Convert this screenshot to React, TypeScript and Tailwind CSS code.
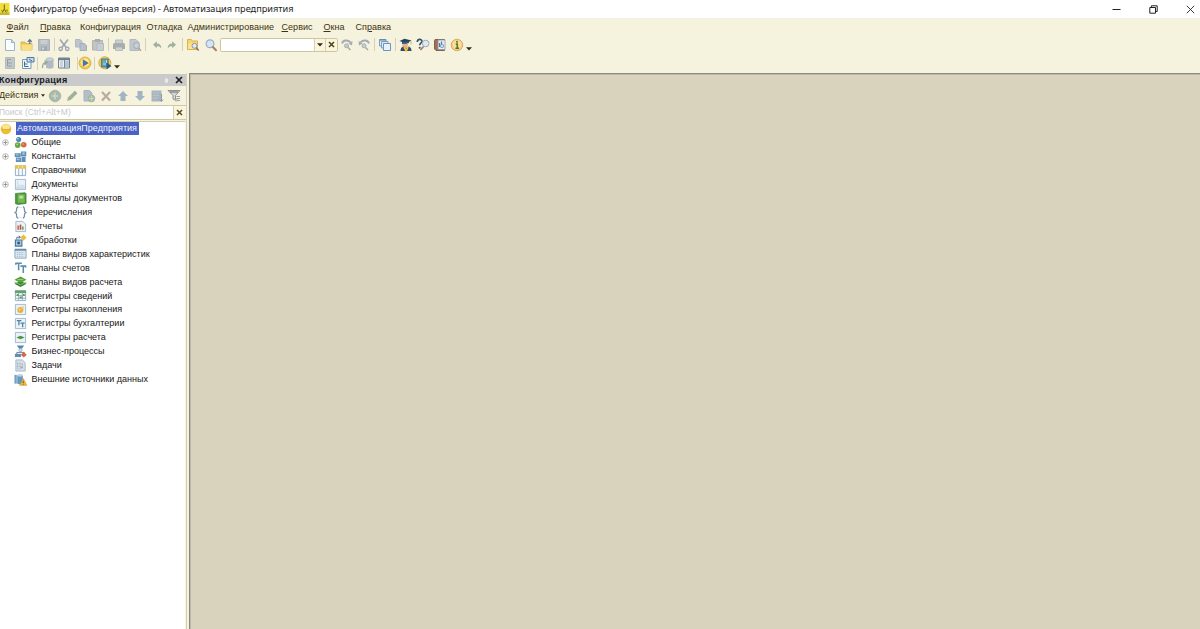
import type { ReactNode } from "react";

type IconProps = { children: ReactNode; className?: string };

function Icon({ children, className = "" }: IconProps) {
  return (
    <svg viewBox="0 0 14 14" width="14" height="14" fill="none" className={`shrink-0 ${className}`}>
      {children}
    </svg>
  );
}

function Divider({ className = "" }: { className?: string }) {
  return <div className={`h-[13px] w-px shrink-0 bg-[#d5d0b9] ${className}`} />;
}

function DropArrow({ className = "" }: { className?: string }) {
  return (
    <svg viewBox="0 0 6 4" width="6" height="4" className={`shrink-0 ${className}`}>
      <path d="M0 .3h6L3 3.6z" fill="#3b2a08" />
    </svg>
  );
}

function TitleBar() {
  return (
    <header className="flex h-[18px] items-center bg-white">
      <svg viewBox="0 0 10 12" width="10" height="12" className="shrink-0">
        <rect width="9.5" height="12" rx="1" fill="#f3dc35" />
        <path d="M0 9.5h9.5V12H0z" fill="#c9b82c" />
        <path d="M4.300 1.500v4.500M1.500 7l1 1.500M7 6.500v2M2.500 9.500 4.300 6l2 3.500" stroke="#6b6520" strokeWidth="1" fill="none" />
      </svg>
      <h1 className="ml-[3.5px] whitespace-nowrap font-['Noto_Sans',sans-serif] text-[9.2px] leading-[18px] text-[#1d1d1d]">
        Конфигуратор (учебная версия) - Автоматизация предприятия
      </h1>
      <div className="ml-auto flex items-center pr-[5px] text-[#222]">
        <svg viewBox="0 0 9 9" width="9" height="9" className="mr-[28px]">
          <path d="M.5 4.5h8" stroke="currentColor" />
        </svg>
        <svg viewBox="0 0 9 9" width="9" height="9" className="mr-[28px]" fill="none">
          <path d="M.8 2.5h5.7v5.7H.8zM2.4 2.3V.8h5.8v5.7H6.7" stroke="currentColor" />
        </svg>
        <svg viewBox="0 0 9 9" width="9" height="9">
          <path d="m.8.8 7.4 7.4M8.2.8.8 8.2" stroke="currentColor" strokeWidth=".9" />
        </svg>
      </div>
    </header>
  );
}

const menu = [
  { before: "", key: "Ф", after: "айл", width: "w-[33.5px]" },
  { before: "", key: "П", after: "равка", width: "w-[40px]" },
  { before: "Конфигурация", key: "", after: "", width: "w-[66.5px]" },
  { before: "Отладка", key: "", after: "", width: "w-[41px]" },
  { before: "Администрирование", key: "", after: "", width: "w-[94px]" },
  { before: "", key: "С", after: "ервис", width: "w-[42px]" },
  { before: "", key: "О", after: "кна", width: "w-[32px]" },
  { before: "Сп", key: "р", after: "авка", width: "w-[40px]" },
];

function MenuBar() {
  return (
    <nav className="flex h-[18px] items-center pl-[6.5px] text-[9px] tracking-[0.05px] text-[#40330f]">
      {menu.map((m) => (
        <span key={m.before + m.key + m.after} className={`shrink-0 whitespace-nowrap ${m.width}`}>
          {m.before}
          {m.key && <span className="underline decoration-[0.7px] underline-offset-1">{m.key}</span>}
          {m.after}
        </span>
      ))}
    </nav>
  );
}

function MainToolbar() {
  return (
    <div className="flex h-[17px] items-center pl-[3px]">
      <Icon>
        <path d="M2.5 1.5h6l3 3v8h-9z" fill="#fbfdff" stroke="#9bb4cb" />
        <path d="M8.5 1.5v3h3" fill="#c3dbef" stroke="#87a5c1" strokeWidth=".8" />
      </Icon>
      <Icon className="ml-[3px]">
        <path d="M1 4h4l1 1.500h6V12H1z" fill="#eec653" stroke="#d3a743" strokeWidth=".7" />
        <path d="M1.500 6.500h10.300V12H1.500z" fill="#f8df82" />
        <path d="M9.800 6V2M7.800 3.800l2-2.200 2 2.200" stroke="#53788c" strokeWidth="1.200" />
      </Icon>
      <Icon className="ml-[3px]">
        <path d="M1.500 1.500h11v11h-11z" fill="#b5bdc2" stroke="#aab2b8" />
        <path d="M3.500 2h7v4h-7z" fill="#c9cfd1" />
        <path d="M4 8.500h6v4H4z" fill="#9fa9b1" />
        <path d="M5 9.500h2v2H5z" fill="#d4d8d8" />
      </Icon>
      <Divider className="ml-[2.500px]" />
      <Icon className="ml-[2.500px]">
        <path d="m3 1.500 6.200 8M11 1.500l-6.200 8" stroke="#98a3ae" strokeWidth="1.500" />
        <circle cx="3.700" cy="10.800" r="1.700" stroke="#99a6b7" strokeWidth="1.300" />
        <circle cx="10.300" cy="10.800" r="1.700" stroke="#99a6b7" strokeWidth="1.300" />
      </Icon>
      <Icon className="ml-[3px]">
        <path d="M1.500 1.500h4.500l2 2v5.500H1.500z" fill="#bcc5cd" stroke="#aeb8c2" />
        <path d="M6 5.500h4.500l2 2v5H6z" fill="#b7c0ca" stroke="#a3aebb" />
      </Icon>
      <Icon className="ml-[3px]">
        <path d="M1.500 2.500h10v9.500h-10z" fill="#c2c5c2" stroke="#b0b3b2" />
        <path d="M4 1h5v3H4z" fill="#a5acb1" />
        <path d="M6 5.500h6.500v7H6z" fill="#c7ced3" stroke="#b0bac2" />
      </Icon>
      <Divider className="ml-[2.500px]" />
      <Icon className="ml-[3.500px]">
        <path d="M3.500 2h7v4h-7z" fill="#cbcfd0" stroke="#b4babd" />
        <path d="M2.500 5h9q1.500 0 1.500 2v4H1V7q0-2 1.500-2z" fill="#a8adb0" />
        <path d="M3.500 9h7v3.500h-7z" fill="#ced1d0" stroke="#9fa4a6" strokeWidth=".6" />
      </Icon>
      <Icon className="ml-[2px]">
        <path d="M2 1.500h6l3 3v8H2z" fill="#c1c8cd" stroke="#b1b9bf" />
        <circle cx="8.500" cy="7.500" r="3" fill="#c9d0d4" stroke="#9da8b1" />
        <path d="m10.500 10 2.500 2.800" stroke="#b29f99" strokeWidth="1.500" />
      </Icon>
      <Divider className="ml-[2.500px]" />
      <Icon className="ml-[4px]">
        <path d="M3 6.800 6.800 3.300V5.500c3 0 4.500 1.700 4.500 5-1-1.700-2.300-2.300-4.500-2.300v2z" fill="#9eb09e" />
      </Icon>
      <Icon className="ml-[1px]">
        <path d="M11 6.800 7.200 3.300V5.500c-3 0-4.500 1.700-4.500 5 1-1.700 2.300-2.300 4.500-2.300v2z" fill="#9eb09e" />
      </Icon>
      <Divider className="ml-[3.500px]" />
      <Icon className="ml-[3px]">
        <path d="M1.500 1.500h3.800l1 1.500h5.200v8.500h-10z" fill="#f6d572" stroke="#dcb14d" />
        <path d="M2 5.500h9v5.500H2z" fill="#fae494" />
        <circle cx="8.500" cy="7.800" r="2.500" fill="#dce8f4" stroke="#8b95a9" />
        <path d="m10.200 9.800 2.500 2.700" stroke="#9c6a55" strokeWidth="1.500" />
      </Icon>
      <Icon className="ml-[4px]">
        <circle cx="6" cy="5.800" r="3.900" fill="#d4e5fa" stroke="#9fabc0" strokeWidth="1.200" />
        <path d="m8.900 9 3.100 3.300" stroke="#b07d6b" strokeWidth="2" strokeLinecap="round" />
      </Icon>
      <div className="ml-[1.500px] flex h-[14px] w-[118px] shrink-0 items-stretch overflow-hidden rounded-[2px] border border-[#cec59c] bg-white">
        <input aria-label="Найти" className="w-[93px] bg-white outline-none" />
        <button className="flex w-[11.500px] items-center justify-center border-l border-[#d8d0ad] bg-[#f9f5df]">
          <DropArrow />
        </button>
        <button className="flex flex-1 items-center justify-center border-l border-[#d8d0ad] bg-[#f9f5df]">
          <svg viewBox="0 0 7 7" width="7" height="7">
            <path d="m1 1 5 5M6 1 1 6" stroke="#4f4212" strokeWidth="1.500" />
          </svg>
        </button>
      </div>
      <Icon className="ml-[2px]">
        <path d="M2 5.500C3 2 8 1.500 10.500 4.500" stroke="#a5acb1" strokeWidth="1.900" />
        <path d="m12.500 3-.5 4.500-3.500-2z" fill="#a5acb1" />
        <circle cx="6.500" cy="7.800" r="2" fill="#c9ced2" stroke="#a5acb4" />
        <path d="m8 9.500 2.500 2.500" stroke="#b1a49e" strokeWidth="1.500" />
      </Icon>
      <Icon className="ml-[3px]">
        <path d="M12 5.500C11 2 6 1.500 3.500 4.500" stroke="#a5acb1" strokeWidth="1.900" />
        <path d="M1.500 3 2 7.500l3.500-2z" fill="#a5acb1" />
        <circle cx="7" cy="7.800" r="2" fill="#c9ced2" stroke="#a5acb4" />
        <path d="m8.500 9.500 2.500 2.500" stroke="#b1a49e" strokeWidth="1.500" />
      </Icon>
      <Divider className="ml-[3.500px]" />
      <Icon className="ml-[3px]">
        <path d="M1.500 1.500H8V8H1.500z" fill="#d9eafa" stroke="#7c9fba" />
        <path d="M1.500 2H8" stroke="#527d9c" />
        <path d="M3.500 3.500H10V10H3.500z" fill="#d9eafa" stroke="#7c9fba" />
        <path d="M5.500 5.500h7v7h-7z" fill="#e5f2ff" stroke="#6f96b6" />
      </Icon>
      <Divider className="ml-[2.500px]" />
      <Icon className="ml-[3.500px]">
        <path d="M3.500 5h5l.5 3-2.500 2-3-2z" fill="#e8b083" />
        <path d="m.5 3 5-2.200 7 1.700-5.500 3z" fill="#26435d" />
        <path d="M3 4v2l3.500-.3L10 5V3.500" fill="#345b7b" />
        <path d="M1.500 13q0-4 3-4.500L7 10l2.500-1.500q3 .5 3 4.500z" fill="#334a63" />
        <path d="m5 9 2.200 3.800L9 9" stroke="#f3c44c" strokeWidth="1.700" />
        <path d="M12 3v3.500" stroke="#d4a53c" strokeWidth=".8" />
      </Icon>
      <Icon className="ml-[3px]">
        <path d="M1.300 4c0-3.500 4.700-3.300 4.700-.8 0 2-2.300 1.800-2.300 4" stroke="#38536d" strokeWidth="1.600" />
        <circle cx="3.700" cy="9.800" r="1" fill="#38536d" />
        <circle cx="9.700" cy="5.500" r="3.300" fill="#dceaf8" stroke="#9bacc1" />
        <path d="m7.500 8.500-3 3.500" stroke="#b07a67" strokeWidth="1.700" />
      </Icon>
      <Icon className="ml-[2.500px]">
        <path d="M2 1.500h9.500v11H3L1.500 11V2.500z" fill="#a66e51" stroke="#754b3a" strokeWidth=".8" />
        <path d="M5 2h7v9.500H5z" fill="#e6edf6" stroke="#8799ad" strokeWidth=".8" />
        <path d="M6.500 9V5M8.500 9V3.500" stroke="#4c78a2" strokeWidth="1.200" />
        <circle cx="9" cy="8" r="1.700" fill="#cbdff2" stroke="#6f89a4" strokeWidth=".7" />
      </Icon>
      <Icon className="ml-[3.500px]">
        <circle cx="7" cy="7" r="5.800" fill="#f7cd78" stroke="#c8a06a" strokeWidth=".8" />
        <circle cx="7" cy="6.500" r="4.200" fill="#fbdf9c" />
        <path d="M5.800 6h1.500v4M5.500 10.300h3.500" stroke="#55751f" strokeWidth="1.500" />
        <circle cx="7" cy="3.800" r="1" fill="#55751f" />
      </Icon>
      <DropArrow className="ml-[2px] mt-[8px]" />
    </div>
  );
}

function SecondToolbar() {
  return (
    <div className="flex h-[20px] items-center pl-[3px]">
      <Icon>
        <path d="M2.500 1.500h9v11h-9z" fill="#c2c8ca" stroke="#b5bbbc" />
        <path d="M4 3.500h4M4.500 4v6H9M5 7h4" stroke="#94a0a9" />
      </Icon>
      <Icon className="ml-[4px]">
        <path d="M1.500 3.500h8.500v9H1.500z" fill="#edf5fc" stroke="#789db8" />
        <path d="M6 1.500h7v4.500H6z" fill="#c8def0" stroke="#4b799e" />
        <path d="M3.500 5.500v5h4M3.500 8h3M8 3l3 2" stroke="#456c87" />
      </Icon>
      <Divider className="ml-[1.500px]" />
      <Icon className="ml-[3px]">
        <path d="M5 3.500v8c0 1.500 7.500 1.500 7.500 0v-8" fill="#b1bbc3" />
        <ellipse cx="8.700" cy="3.500" rx="3.800" ry="1.700" fill="#cbd2d5" stroke="#a5b0b8" strokeWidth=".7" />
        <path d="M1.500 12C1.500 8 2.500 6.500 5 6.500M3.500 4.500l2.500 2-2.500 2.200" stroke="#98a99a" strokeWidth="1.300" />
      </Icon>
      <Icon className="ml-[2.500px]">
        <path d="M1.500 2h11v10h-11z" fill="#eef2f3" stroke="#6f8192" />
        <path d="M1.500 3.200h11" stroke="#667b90" strokeWidth="2" />
        <path d="M3 6h3M3 8h3M3 10h3" stroke="#a4b6c3" />
        <path d="M8 5h4v6.500H8z" fill="#b4c5d2" />
        <path d="M7.500 4v8" stroke="#78899b" />
      </Icon>
      <Divider className="ml-[5.500px]" />
      <Icon className="ml-[0.500px]">
        <circle cx="7" cy="7" r="6" fill="#f4c646" stroke="#dba63b" strokeWidth=".8" />
        <circle cx="7" cy="6.500" r="4.300" fill="#fce69a" />
        <path d="m4.800 3.200 6 3.800-6 3.800z" fill="#477999" />
      </Icon>
      <Divider className="ml-[2px]" />
      <Icon className="ml-[2.500px]">
        <circle cx="6.800" cy="6.800" r="6" fill="#f6cb4e" stroke="#d6a02e" strokeWidth=".8" />
        <path d="M3.500 3h6.800v8H3.500z" fill="#5c9ebc" stroke="#38739a" strokeWidth=".8" />
        <path d="M5 4.500h2v2H5z" fill="#7bbb62" />
        <path d="M5 8h3M8.500 4v3" stroke="#c4e0ef" />
        <path d="m8.500 6.500 5 3.500-5 3.500z" fill="#285d7c" />
      </Icon>
      <DropArrow className="ml-[2px] mt-[8px]" />
    </div>
  );
}

function ActionBar() {
  return (
    <div className="flex h-[18.5px] items-center pt-px">
      <span className="-ml-px w-[41.5px] shrink-0 whitespace-nowrap text-[9px] text-[#40330f]">Действия</span>
      <svg viewBox="0 0 4 3" width="4" height="3" className="shrink-0">
        <path d="M0 .3h4L2 2.700z" fill="#3b2a08" />
      </svg>
      <Icon className="ml-[3.500px]">
        <circle cx="7" cy="7" r="5.800" fill="#a9b9a9" stroke="#a0aea3" strokeWidth=".7" />
        <path d="M7 3.700v6.600M3.700 7h6.600" stroke="#cbd5c3" strokeWidth="1.700" />
      </Icon>
      <Icon className="ml-[3px]">
        <path d="m2 12 1.200-3.700L8.500 3l2.700 2.500-5.300 5.300z" fill="#9fb199" />
        <path d="m8.500 3 1.300-1.200 2.600 2.600-1.200 1.200z" fill="#93a5a2" />
      </Icon>
      <Icon className="ml-[3px]">
        <path d="M2 1.500h5.500L10 4v8H2z" fill="#b3bfc8" stroke="#a8b5bf" />
        <circle cx="9.500" cy="9.500" r="3.700" fill="#a5b9a3" />
        <path d="M9.500 7v5M7 9.500h5" stroke="#cbd5c3" strokeWidth="1.200" />
      </Icon>
      <Icon className="ml-[3px]">
        <path d="m3 3 8 8.500M11 3 3 11.500" stroke="#bba9a2" strokeWidth="2.300" />
      </Icon>
      <Icon className="ml-[3px]">
        <path d="m7 2 5 5H9.500v5h-5V7H2z" fill="#a1b4c3" />
      </Icon>
      <Icon className="ml-[3px]">
        <path d="m7 12 5-5H9.500V2h-5v5H2z" fill="#a1b4c3" />
      </Icon>
      <Icon className="ml-[3px]">
        <path d="M1.500 1.500h10v11h-10z" fill="#aab5bf" />
        <path d="M3 4h6M3 6.500h6M3 9h5" stroke="#bac3ca" />
        <path d="M11.500 5v7M9.500 10.500l2 2 1.500-2" stroke="#8e9ba9" />
      </Icon>
      <Icon className="ml-[3px]">
        <path d="M1 1.500h12L8.500 6.500v5L6 10V6.500z" fill="#d4d7d5" stroke="#85888b" strokeWidth=".9" />
        <path d="M3 3h8" stroke="#626a70" />
        <path d="M9.500 7.500h3.500M9.500 9.500h3.500M9.500 11.500h3.500" stroke="#8fa3b3" strokeWidth="1" />
        <path d="M8.500 10h2v2.500h-2z" fill="#dfb878" />
      </Icon>
    </div>
  );
}

function Sheet() {
  return <path d="M1.500 1.500h11v11h-11z" fill="#eaf2f8" stroke="#9db7cb" />;
}

function Grid() {
  return (
    <>
      <path d="M1.500 2h11v10.500h-11z" fill="#f4faff" stroke="#8facbf" />
      <path d="M5 3v9.500M9 3v9.500" stroke="#93afc2" />
    </>
  );
}

const tree: { label: string; expandable?: boolean; icon: ReactNode }[] = [
  {
    label: "Общие",
    expandable: true,
    icon: (
      <>
        <circle cx="5" cy="3.700" r="2.700" fill="#4c83b3" />
        <circle cx="4" cy="9.800" r="3.100" fill="#62ab42" />
        <circle cx="10.500" cy="9.500" r="3" fill="#d36b42" />
        <circle cx="4.200" cy="3" r="1" fill="#9fc4e2" />
        <circle cx="3.300" cy="9" r="1" fill="#a8d882" />
        <circle cx="9.800" cy="8.700" r=".9" fill="#efa583" />
      </>
    ),
  },
  {
    label: "Константы",
    expandable: true,
    icon: (
      <>
        <path d="M.8 3.500h6.400v4H.8zM7.500 1.500h5.700v5.500H7.500zM2 8h6v5H2zM8.500 7.500h4V13h-4z" fill="#5f8fb5" />
        <path d="M2 4.500h3V6H2zM9 2.500h2.500V5H9zM3 9.500h3V11H3z" fill="#a4c5de" />
      </>
    ),
  },
  {
    label: "Справочники",
    icon: (
      <>
        <Grid />
        <path d="M1 1.500h12V5H1z" fill="#e7c04f" />
        <path d="M5 1.500v3M9 1.500v3" stroke="#fae7a7" />
      </>
    ),
  },
  {
    label: "Документы",
    expandable: true,
    icon: (
      <>
        <Sheet />
        <path d="M4 3v5h7" stroke="#c8d9e5" />
        <path d="M2 9h10v3H2z" fill="#cddce8" />
      </>
    ),
  },
  {
    label: "Журналы документов",
    icon: (
      <>
        <path d="M1.500 1.500 12 .8l1 1v10.500L4 13.500l-2.500-1z" fill="#4a983c" stroke="#377c35" strokeWidth=".7" />
        <path d="M4 2.500h7.500v9H4z" fill="#74b952" />
        <path d="M5.500 4h4.500v3H5.500z" fill="#b9df99" />
      </>
    ),
  },
  {
    label: "Перечисления",
    icon: (
      <>
        <path d="M4.500 1C2 1 3 5 2.500 6L1 7l1.500 1c.5 1-.5 5 2 5M9.500 1c2.500 0 1.500 4 2 5l1.500 1-1.500 1c-.5 1 .5 5-2 5" stroke="#738fa5" strokeWidth="1.300" />
        <path d="M5 1.500h4M5 12.500h4" stroke="#b7c6d0" strokeDasharray="1 1" />
      </>
    ),
  },
  {
    label: "Отчеты",
    icon: (
      <>
        <path d="M2 1.500h7.500l3 3v8H2z" fill="#e9f1f7" stroke="#9eb6c9" />
        <path d="M4.500 10.500V6" stroke="#d36656" strokeWidth="1.800" />
        <path d="M7 10.500V5" stroke="#bd4b3b" strokeWidth="1.700" />
        <path d="M9.500 10.500V7" stroke="#66a559" strokeWidth="1.700" />
      </>
    ),
  },
  {
    label: "Обработки",
    icon: (
      <>
        <path d="m10.200.5 3.300 3.300-3.300 3.400L7 3.800z" fill="#edbd37" />
        <path d="M1.500 6.500h7v6.500h-7z" fill="#a9c8dd" stroke="#477399" strokeWidth="1.200" />
        <circle cx="5" cy="9.800" r="1.600" fill="#315f85" />
        <path d="M3 6V3.500h3.500M5 2l2 1.500L5 5" stroke="#4d728f" />
      </>
    ),
  },
  {
    label: "Планы видов характеристик",
    icon: (
      <>
        <path d="M1 2.500h12v9.500H1z" fill="#dfebf3" stroke="#86a5bc" />
        <path d="M1 3h12" stroke="#678dab" strokeWidth="2" />
        <path d="M3 6h8M3 8h8M3 10h8" stroke="#9cb4c5" strokeDasharray="1.500 1" />
      </>
    ),
  },
  {
    label: "Планы счетов",
    icon: <path d="M1.500 2.500h7M5 2.500V10M7 5.500h6M10 5.500V13M2 2v2M12.500 5v2" stroke="#5b8daf" strokeWidth="1.700" />,
  },
  {
    label: "Планы видов расчета",
    icon: (
      <>
        <path d="m.5 9.500 6.500-3 6.500 3-6.500 3.500z" fill="#358231" />
        <path d="m.5 5 6.500-3.500L13.500 5 7 8.500z" fill="#56a13e" />
        <path d="m.5 7.500 6.500 3 6.500-3" stroke="#8dc86c" strokeWidth="1" />
        <path d="M4 5h6" stroke="#a8d987" />
      </>
    ),
  },
  {
    label: "Регистры сведений",
    icon: (
      <>
        <Grid />
        <path d="M1 1.500h12v3H1z" fill="#65a36b" />
        <path d="M2 7h10M2 10h10" stroke="#92b4a0" />
        <path d="M3 5.500h2v2H3zM6 8h3v2H6zM9.500 5.500h2v2h-2z" fill="#609b70" />
      </>
    ),
  },
  {
    label: "Регистры накопления",
    icon: (
      <>
        <Sheet />
        <circle cx="6.800" cy="7.500" r="3.300" fill="#e4b341" />
        <path d="m7 4 4-.5-1 4z" fill="#f4cf66" />
        <circle cx="6" cy="7" r="1" fill="#f8df92" />
      </>
    ),
  },
  {
    label: "Регистры бухгалтерии",
    icon: (
      <>
        <Sheet />
        <path d="M3 4h5M5.300 4v5M7 6.500h4.500M9.300 6.500V11" stroke="#4f84a9" strokeWidth="1.400" />
      </>
    ),
  },
  {
    label: "Регистры расчета",
    icon: (
      <>
        <Sheet />
        <path d="m2.500 7 4.500-2 4.500 2L7 9z" fill="#4d9440" />
      </>
    ),
  },
  {
    label: "Бизнес-процессы",
    icon: (
      <>
        <path d="M3 .5h8L8 4.500H6z" fill="#5789ac" />
        <path d="M7 4v4M3 10V8h8v2" stroke="#5c829d" />
        <circle cx="7" cy="5.500" r="1.900" fill="#c6ddea" stroke="#7fa3bb" strokeWidth=".6" />
        <path d="M1 9.500h6.500V13H1z" fill="#608eaf" />
        <path d="m10.500 7.500 3.200 3-3.200 3-3.200-3z" fill="#dc6148" />
      </>
    ),
  },
  {
    label: "Задачи",
    icon: (
      <>
        <path d="M2 1h7l3 3v9H2z" fill="#d6e0e8" stroke="#a5b6c4" />
        <path d="M4 4v7M6.500 4v7M9 5v6" stroke="#92a6b6" strokeDasharray="2 1" />
        <path d="M7 8h2v2H7z" fill="#d79b8e" />
      </>
    ),
  },
  {
    label: "Внешние источники данных",
    icon: (
      <>
        <path d="M.5 2H3v9.500H.5z" fill="#71a0c2" />
        <path d="M3.500 2.500v8.500c0 1.500 6 1.500 6 0V2.500" fill="#6799bf" />
        <ellipse cx="6.500" cy="2.500" rx="3" ry="1.500" fill="#b9d6e9" />
        <path d="m10 6 3.800 7.300H6.200z" fill="#eebb39" stroke="#c48e2b" strokeWidth=".6" />
        <path d="M10 8.500v2.200M10 11.500v1" stroke="#665022" />
      </>
    ),
  },
];

function Expander() {
  return (
    <svg viewBox="0 0 7 7" width="7" height="7" fill="none">
      <circle cx="3.500" cy="3.500" r="2.900" fill="#fafafa" stroke="#a8a8a8" strokeWidth=".7" />
      <path d="M3.500 1.500v4M1.500 3.500h4" stroke="#858585" strokeWidth=".8" />
    </svg>
  );
}

function Sidebar() {
  return (
    <aside className="flex w-[187px] shrink-0 flex-col border-r border-[#d5d0b6] bg-[#f5f2de] pt-px">
      <div className="flex h-[12px] w-[186px] items-center bg-[#cacaca]">
        <h2 className="-ml-px whitespace-nowrap text-[9px] font-bold tracking-[0.26px] text-[#1b1b1b]">Конфигурация</h2>
        <span className="ml-auto h-[5px] w-[3px] rounded-full bg-[#e8e8e8]" />
        <svg viewBox="0 0 8 8" width="8" height="8" className="ml-[7px] mr-[3px]">
          <path d="m1 1 6 6M7 1 1 7" stroke="#222" strokeWidth="1.700" />
        </svg>
      </div>
      <ActionBar />
      <div className="flex h-[15px] w-[186px] items-stretch border-y border-[#cec8a7] bg-white">
        <input
          aria-label="Поиск"
          placeholder="Поиск (Ctrl+Alt+M)"
          className="-ml-px w-[173.5px] bg-white text-[8.5px] text-[#333] outline-none placeholder:text-[#c8c8c8]"
        />
        <button className="flex flex-1 items-center justify-center border-l border-[#d8d0ad] bg-[#f9f5df]">
          <svg viewBox="0 0 7 7" width="7" height="7">
            <path d="m1 1 5 5M6 1 1 6" stroke="#5b4c17" strokeWidth="1.500" />
          </svg>
        </button>
      </div>
      <div className="mt-[1px] w-[185px] flex-1 border-t border-[#d3cdb0] bg-white text-[9px] text-[#161616]">
        <div className="flex h-[14px] items-center">
          <svg viewBox="0 0 12 12" width="12" height="12" className="shrink-0">
            <circle cx="6" cy="6" r="5.300" fill="#edbd35" />
            <ellipse cx="6" cy="3.800" rx="4" ry="2.600" fill="#fbe690" />
            <path d="M1.500 6.500h9" stroke="#d9a92c" strokeWidth=".7" />
          </svg>
          <span className="ml-[4px] flex h-[13px] w-[123px] items-center whitespace-nowrap bg-[#4a62c3] pl-px tracking-[0.03px] text-[#f0f2fb]">
            АвтоматизацияПредприятия
          </span>
        </div>
        <ul>
          {tree.map((n) => (
            <li key={n.label} className="flex h-[13.94px] items-center">
              <span className="flex w-[14px] shrink-0 pl-[1.5px]">{n.expandable && <Expander />}</span>
              <svg viewBox="0 0 14 14" width="13" height="13" fill="none" className="shrink-0">
                {n.icon}
              </svg>
              <span className="ml-[4.5px] whitespace-nowrap pt-[0.5px]">{n.label}</span>
            </li>
          ))}
        </ul>
      </div>
    </aside>
  );
}

export default function App() {
  return (
    <div className="flex h-[629px] w-[1200px] flex-col overflow-hidden bg-[#f5f2de] font-['Liberation_Sans',sans-serif] leading-none">
      <TitleBar />
      <MenuBar />
      <MainToolbar />
      <SecondToolbar />
      <div className="flex min-h-0 flex-1">
        <Sidebar />
        <main className="ml-[2px] flex-1 border-l border-t border-[#858a80] bg-[#d9d3bd] shadow-[inset_1px_1px_0_#bdb9a6]" />
      </div>
    </div>
  );
}
